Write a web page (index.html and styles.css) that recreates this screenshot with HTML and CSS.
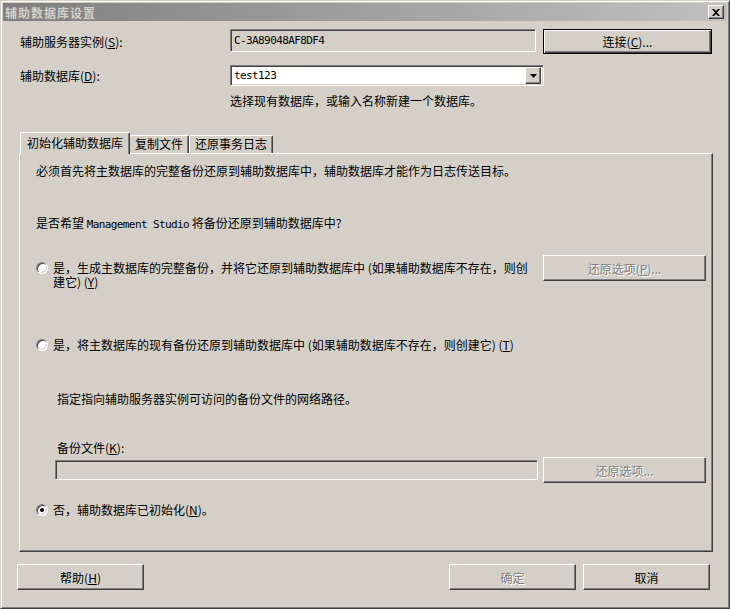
FILE: index.html
```html
<!DOCTYPE html>
<html lang="zh-CN">
<head>
  <meta charset="UTF-8">
  <title>辅助数据库设置</title>
  <link rel="stylesheet" href="styles.css">
</head>
<body>

  <div class="window">
    <!-- 标题栏 -->
    <div class="titlebar">
      <span class="title">辅助数据库设置</span>
      <button class="btn close" title="关闭">
        <svg width="8" height="7" viewBox="0 0 8 7"><path d="M0 0h2l2 2 2-2h2L5 3.5 8 7H6L4 5 2 7H0l3-3.5z" fill="#000"/></svg>
      </button>
    </div>

    <div class="dlg">
      <div class="row row-server">
        <label class="lbl">辅助服务器实例(<u>S</u>):</label>
        <div class="field disabled-field"><span class="mono">C-3A89048AF8DF4</span></div>
        <button class="btn default connect">连接(<u>C</u>)...</button>
      </div>

      <div class="row row-db">
        <label class="lbl">辅助数据库(<u>D</u>):</label>
        <div class="field combo">
          <span class="mono">test123</span>
          <span class="btn drop">
            <svg width="7" height="4" viewBox="0 0 7 4"><path d="M0 0h7L3.5 4z" fill="#000"/></svg>
          </span>
        </div>
      </div>

      <p class="hint">选择现有数据库，或输入名称新建一个数据库。</p>

      <div class="tabs">
        <div class="tab active">初始化辅助数据库</div>
        <div class="tab">复制文件</div>
        <div class="tab">还原事务日志</div>
      </div>

      <div class="panel">
        <p class="intro">必须首先将主数据库的完整备份还原到辅助数据库中，辅助数据库才能作为日志传送目标。</p>
        <p class="question">是否希望 <span class="mono">Management Studio</span> 将备份还原到辅助数据库中?</p>

        <div class="opt opt-full">
          <div class="radio-line">
            <span class="radio"></span>
            <span class="radio-text">是，生成主数据库的完整备份，并将它还原到辅助数据库中 (如果辅助数据库不存在，则创<br>建它) (<u>Y</u>)</span>
          </div>
          <button class="btn off">还原选项(<u>P</u>)...</button>
        </div>

        <div class="opt opt-existing">
          <div class="radio-line">
            <span class="radio"></span>
            <span class="radio-text">是，将主数据库的现有备份还原到辅助数据库中 (如果辅助数据库不存在，则创建它) (<u>T</u>)</span>
          </div>
        </div>

        <div class="backup">
          <p class="backup-note">指定指向辅助服务器实例可访问的备份文件的网络路径。</p>
          <label class="backup-lbl">备份文件(<u>K</u>):</label>
          <div class="backup-row">
            <div class="field disabled-field path"></div>
            <button class="btn off">还原选项...</button>
          </div>
        </div>

        <div class="opt opt-none">
          <div class="radio-line">
            <span class="radio checked"></span>
            <span class="radio-text">否，辅助数据库已初始化(<u>N</u>)。</span>
          </div>
        </div>
      </div>

      <div class="footer">
        <button class="btn foot help">帮助(<u>H</u>)</button>
        <span class="spacer"></span>
        <button class="btn foot off">确定</button>
        <button class="btn foot">取消</button>
      </div>
    </div>
  </div>

</body>
</html>
```

FILE: styles.css
```css
* {
  box-sizing: border-box;
}
body {
  margin: 0;
  background: #d4d0c8;
  font-family: "Noto Sans CJK SC", sans-serif;
  font-size: 12px;
  color: #000;
}
p {
  margin: 0;
}
u {
  text-decoration: underline;
  text-underline-offset: 1px;
}
.mono {
  font-family: "DejaVu Sans Mono", monospace;
  font-size: 11px;
  letter-spacing: -0.6px;
}

/* 窗口外框 */
.window {
  width: 730px;
  height: 609px;
  display: flex;
  flex-direction: column;
  padding: 2px;
  background: #d4d0c8;
  border: 1px solid;
  border-color: #d4d0c8 #404040 #404040 #d4d0c8;
  box-shadow: inset 1px 1px #fff, inset -1px -1px #808080;
}
.titlebar {
  height: 18px;
  display: flex;
  align-items: center;
  justify-content: space-between;
  padding: 0 3px 0 2px;
  background: linear-gradient(to right, #808080, #c0c0c0);
}
.title {
  color: #d4d0c8;
  font-weight: bold;
  letter-spacing: 1px;
}

/* 经典按钮 */
.btn {
  font: inherit;
  color: #000;
  background: #d4d0c8;
  border: 1px solid;
  border-color: #fff #404040 #404040 #fff;
  box-shadow: inset -1px -1px #808080;
  padding: 0;
  display: flex;
  align-items: center;
  justify-content: center;
}
.btn.default {
  border-color: #000;
  box-shadow: inset 1px 1px #fff, inset -1px -1px #404040, inset -2px -2px #808080;
}
.btn.off {
  color: #808080;
  text-shadow: 1px 1px 0 #fff;
}
.close {
  width: 16px;
  height: 14px;
}

.dlg {
  flex: 1;
  display: flex;
  flex-direction: column;
  padding: 8px 15px 0 17px;
}
.row {
  display: flex;
}
.lbl {
  width: 210px;
  line-height: 15px;
}
.field {
  border: 1px solid;
  border-color: #808080 #fff #fff #808080;
  box-shadow: inset 1px 1px #404040, inset -1px -1px #d4d0c8;
  display: flex;
  align-items: center;
  padding-left: 3px;
}
.disabled-field {
  background: #d4d0c8;
}

.row-server {
  height: 25px;
  align-items: center;
}
.row-server .field {
  width: 306px;
  height: 23px;
  align-self: flex-start;
}
.connect {
  width: 169px;
  height: 25px;
  margin-left: 7px;
}

.row-db {
  margin-top: 11px;
  align-items: center;
}
.combo {
  width: 314px;
  height: 21px;
  background: #fff;
  justify-content: space-between;
  padding: 2px;
  padding-left: 3px;
}
.drop {
  width: 16px;
  height: 17px;
}

.hint {
  margin: 7px 0 0 210px;
  line-height: 15px;
}

/* 选项卡 */
.tabs {
  display: flex;
  align-items: flex-end;
  height: 21px;
  margin-top: 24px;
  position: relative;
  z-index: 1;
}
.tab {
  height: 18px;
  line-height: 16px;
  padding: 0 5px;
  background: #d4d0c8;
  border: 1px solid;
  border-color: #fff #404040 transparent #fff;
  border-bottom: 0;
  border-radius: 2px 2px 0 0;
  box-shadow: inset -1px 0 #808080;
}
.tab.active {
  height: 22px;
  margin-bottom: -1px;
  padding: 0 6px;
  line-height: 19px;
}
.tab.active + .tab {
  border-left: 0;
}

.panel {
  height: 399px;
  margin: 0 -1px 0 -1px;
  border: 1px solid;
  border-color: #fff #404040 #404040 #fff;
  box-shadow: inset -1px -1px #808080;
  padding: 9px 6px 0 16px;
}
.intro {
  line-height: 15px;
}
.question {
  margin-top: 37px;
  line-height: 15px;
}

.opt {
  display: flex;
  justify-content: space-between;
  align-items: flex-start;
}
.radio-line {
  display: flex;
  align-items: flex-start;
}
.radio {
  flex: none;
  width: 12px;
  height: 12px;
  margin: 1px 5px 0 0;
  border-radius: 50%;
  background: #fff;
  border: 1px solid;
  border-color: #808080 #fff #fff #808080;
  box-shadow: inset 1px 1px #404040, inset -1px -1px #d4d0c8;
  position: relative;
}
.radio.checked::after {
  content: "";
  position: absolute;
  left: 3px;
  top: 3px;
  width: 4px;
  height: 4px;
  border-radius: 50%;
  background: #000;
}
.radio-text {
  display: block;
  line-height: 14px;
}

.opt-full {
  margin-top: 23px;
}
.opt-full .radio-line {
  margin-top: 6px;
}
.opt-full .btn {
  width: 163px;
  height: 26px;
}
.opt-existing {
  margin-top: 49px;
}

.backup {
  padding-left: 21px;
}
.backup-note {
  margin-top: 39px;
  line-height: 15px;
}
.backup-lbl {
  display: block;
  margin-top: 34px;
  line-height: 15px;
}
.backup-row {
  display: flex;
  align-items: center;
  margin-left: -2px;
  margin-top: 2px;
}
.path {
  width: 483px;
  height: 20px;
}
.backup-row .btn {
  width: 163px;
  height: 26px;
  margin-left: 5px;
}

.opt-none {
  margin-top: 20px;
}

/* 底部按钮 */
.footer {
  display: flex;
  margin: 12px 2px 0 -3px;
  gap: 7px;
}
.spacer {
  flex: 1;
}
.foot {
  width: 127px;
  height: 26px;
}
```
